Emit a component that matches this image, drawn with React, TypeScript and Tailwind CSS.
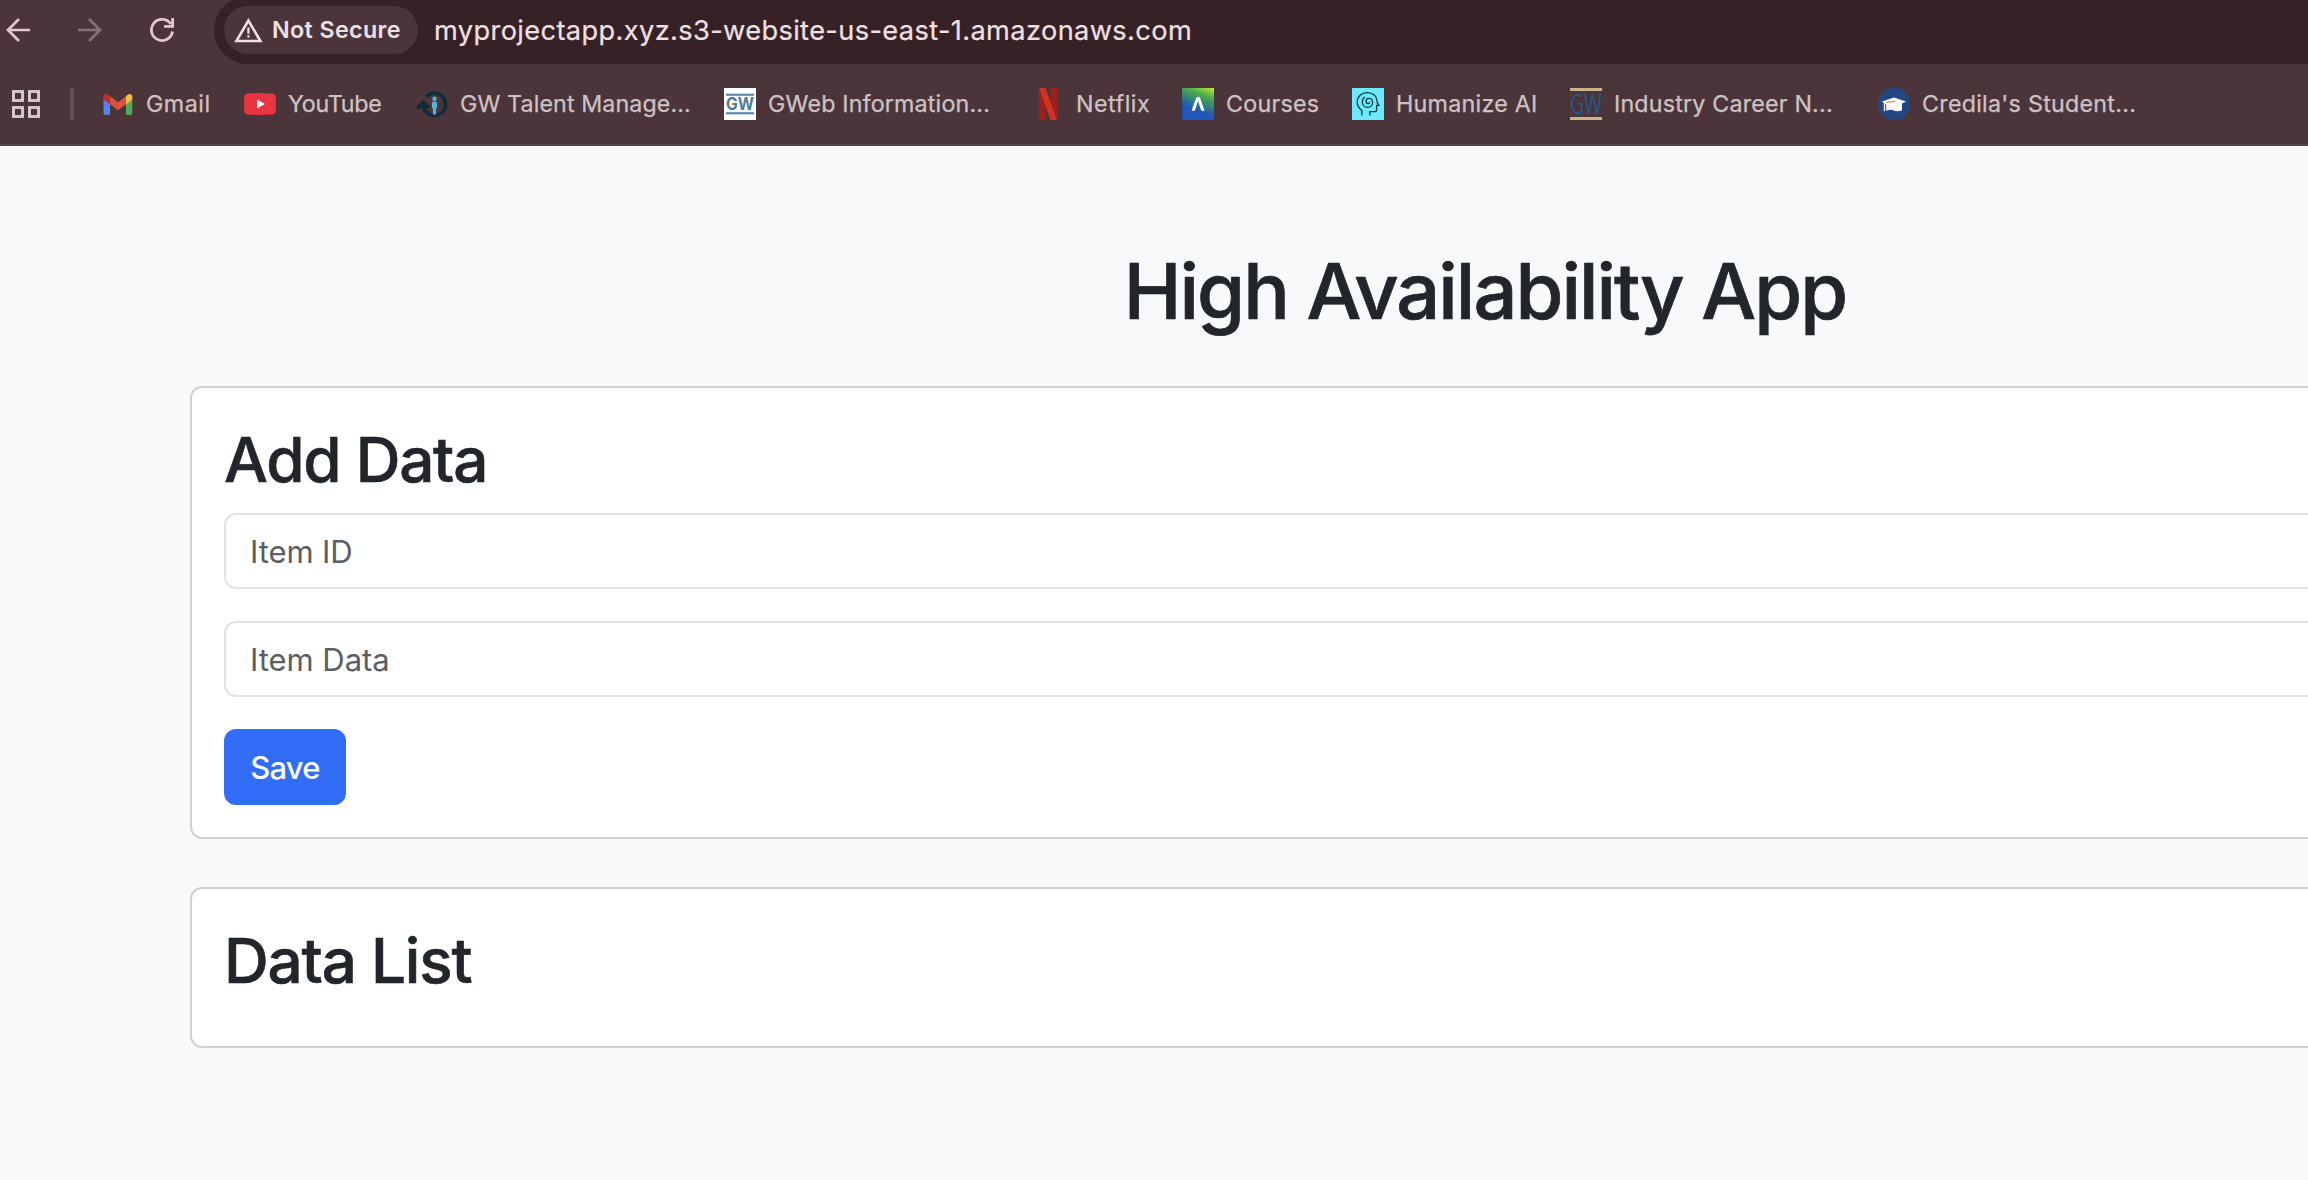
import type { ReactNode } from "react";

const GmailIcon = () => (
  <svg viewBox="0 0 32 32" className="size-8">
    <path d="M1.5 10.5 8 15.2V27H3.4A1.9 1.9 0 0 1 1.5 25.1Z" fill="#4f86ee" />
    <path d="M30.3 10.5 24 15.2V27h4.4a1.9 1.9 0 0 0 1.9-1.9Z" fill="#58a85c" />
    <path d="M24 8.2 26 6.6C27.8 5.2 30.3 6.4 30.3 8.9V11.5L24 16.2Z" fill="#f2c042" />
    <path d="M8 8.2 6 6.6C4.2 5.2 1.5 6.4 1.5 8.9V11.5L8 16.2Z" fill="#b8342b" />
    <path d="M8 8.2 16 14.2 24 8.2V16.2L16 22.2 8 16.2Z" fill="#dc5140" />
  </svg>
);

const YouTubeIcon = () => (
  <svg viewBox="0 0 32 32" className="size-8">
    <path d="M4 5.4Q16 4.6 28 5.4Q31.4 5.7 31.7 9Q32.3 16 31.7 23Q31.4 26.3 28 26.6Q16 27.4 4 26.6Q.6 26.3.3 23Q-.3 16 .3 9Q.6 5.7 4 5.4Z" fill="#ea3340" />
    <path d="M13 11.5 21 16l-8 4.5Z" fill="#fff" />
  </svg>
);

const TalentIcon = () => (
  <svg viewBox="0 0 32 32" className="size-8">
    <path d="M10.3 8.6A11.2 11.2 0 1 1 8 20.5L7.3 15" fill="none" stroke="#122b3b" strokeWidth="3.6" />
    <path d="M1.5 20.5 7.5 14.3 12.8 19.8" fill="none" stroke="#122b3b" strokeWidth="4" />
    <circle cx="18.5" cy="10.8" r="2.2" fill="#4fb4e0" />
    <path d="M15.9 15.2q0-1.6 1.6-1.6h2q1.6 0 1.6 1.6v5h-1v6.4h-3.2v-6.4h-1Z" fill="#4fb4e0" />
  </svg>
);

const GWebIcon = () => (
  <svg viewBox="0 0 32 32" className="size-8 overflow-visible">
    <path fill="#fff" d="M0 0h32v32H0z" />
    <path fill="#4f83a3" d="M2 5.8h28v2H2zM2 24.2h28v2H2z" />
    <text x="16" y="21.8" textAnchor="middle" textLength="28" lengthAdjust="spacingAndGlyphs" fill="#4b7d9c" className="font-['Inter'] text-[17px] font-bold">GW</text>
  </svg>
);

const NetflixIcon = () => (
  <svg viewBox="0 0 32 32" className="size-8">
    <path fill="#9f1f1b" d="M7 0h6.4v32H7zM18.6 0H25v32h-6.4z" />
    <path fill="#d33026" d="M7 0h6.4L25 32h-6.4z" />
  </svg>
);

const CoursesIcon = () => (
  <span className="flex size-8 items-center justify-center bg-[linear-gradient(202deg,#c8ea3e_0%,#4fae4a_24%,#35896c_42%,#2256b8_66%,#2355bd_100%)]">
    <svg viewBox="0 0 32 32" className="size-8">
      <path d="M9.6 22.8 14.4 9.2h3.4l4.8 13.6h-3.3L16 12.8l-3.2 10Z" fill="#fff" />
    </svg>
  </span>
);

const HumanizeIcon = () => (
  <svg viewBox="0 0 32 32" className="size-8" fill="none" stroke="#123a42" strokeWidth="1.3">
    <path fill="#6ceafb" stroke="none" d="M0 0h32v32H0z" />
    <path d="M9.8 27.5V22.5C6.9 20.3 5.2 17.3 5.2 14 5.2 8.5 9.6 4.6 15.5 4.6c5.7 0 9.3 3.6 9.6 8.4l.1 1.5 1.7 2.9h-2.3v4.3q0 2-2 2h-4.8v3.8" />
    <path d="M13 9C11.2 9.9 10.3 11.8 10.3 13.7C10.3 16.9 12.6 19.3 15.6 19.3C18.6 19.3 20.6 17 20.6 14.4C20.6 12 19 10.3 17 10.3C15.2 10.3 14 11.5 14 13.1C14 14.6 15 15.6 16.2 15.6C17.2 15.6 17.8 15 17.8 14.1" />
  </svg>
);

const IndustryIcon = () => (
  <svg viewBox="0 0 32 32" className="size-8 overflow-visible">
    <path fill="#c9b58c" d="M0 0h32v3H0zM0 29h32v3H0z" />
    <text x="16" y="25.6" textAnchor="middle" textLength="32" lengthAdjust="spacingAndGlyphs" fill="#24588a" className="font-['Open_Sans'] text-[27px]">GW</text>
  </svg>
);

const CredilaIcon = () => (
  <svg viewBox="0 0 32 32" className="size-8">
    <circle cx="16" cy="16" r="16" fill="#234685" />
    <path d="M4 13.4 16 9.4 28 13.6 24 15.4V22.2q-4.5 2-8 .3-3.5-1.4-7.8.2V16.2L7.2 15.8V22.7L5.8 23.2V15Z" fill="#fff" />
    <path d="M8 14.3 16.5 13.4V12.6" fill="none" stroke="#e58a92" strokeWidth="1.3" />
  </svg>
);

type Bookmark = { icon: ReactNode; label: string; box: string; text: string };

const bookmarks: Bookmark[] = [
  { icon: <GmailIcon />, label: "Gmail", box: "w-[142px]", text: "tracking-[0.5px]" },
  { icon: <YouTubeIcon />, label: "YouTube", box: "w-[172px]", text: "tracking-[-0.25px]" },
  { icon: <TalentIcon />, label: "GW Talent Manage...", box: "w-[308px]", text: "tracking-[0.1px]" },
  { icon: <GWebIcon />, label: "GWeb Information...", box: "w-[308px]", text: "tracking-[0.17px]" },
  { icon: <NetflixIcon />, label: "Netflix", box: "w-[150px]", text: "tracking-[0.5px]" },
  { icon: <CoursesIcon />, label: "Courses", box: "w-[170px]", text: "tracking-[0.24px]" },
  { icon: <HumanizeIcon />, label: "Humanize AI", box: "w-[218px]", text: "tracking-[0.26px]" },
  { icon: <IndustryIcon />, label: "Industry Career N...", box: "w-[308px]", text: "tracking-[0.19px]" },
  { icon: <CredilaIcon />, label: "Credila's Student...", box: "w-[308px]", text: "tracking-[0.27px]" },
];

function Toolbar() {
  return (
    <div className="flex h-16 items-start pl-1.5">
      <svg viewBox="0 0 24 24" className="mt-[18px] size-6 shrink-0" fill="none" stroke="#e6c4cc" strokeWidth="2.7">
        <path d="M24 12H2.5M13 1 2 12l11 11" />
      </svg>
      <svg viewBox="0 0 24 24" className="mt-[18px] ml-12 size-6 shrink-0" fill="none" stroke="#8a7077" strokeWidth="2.7">
        <path d="M0 12h21.5M11 1l11 11-11 11" />
      </svg>
      <svg viewBox="0 0 24 24" className="mt-[18px] ml-12 size-6 shrink-0" fill="none" stroke="#e6c4cc" strokeWidth="2.8">
        <path d="M22.5 13.5A10.6 10.6 0 1 1 20.8 6M22.6 0V8.4H14" />
      </svg>
      <div className="-mt-1 ml-10 flex h-[68px] flex-1 items-center rounded-l-full bg-[#362126] pl-2.5">
        <div className="flex h-12 w-[194px] shrink-0 items-center rounded-full bg-[#4b353a] pl-2.5">
          <svg viewBox="0 0 29 25" className="h-[25px] w-[29px] shrink-0" fill="none" stroke="#f0e0e3" strokeWidth="2.6">
            <path d="M14.4 2.6 26.4 23H2.4Z" />
            <path d="M14.4 9.5v6.2M14.4 17.2v2.2" strokeWidth="2.2" />
          </svg>
          <span className="ml-[9px] whitespace-nowrap text-[23.25px] font-semibold tracking-[0.38px] text-[#efe0e3]">Not Secure</span>
        </div>
        <span className="ml-4 whitespace-nowrap pt-0.5 text-[27.2px] tracking-[0.38px] text-[#efe0e3] [-webkit-text-stroke:0.2px]">
          myprojectapp.xyz.s3-website-us-east-1.amazonaws.com
        </span>
      </div>
    </div>
  );
}

function BookmarksBar() {
  return (
    <div className="flex h-20 items-center pl-3">
      <div className="grid shrink-0 grid-cols-2 gap-1">
        <i className="size-3 border-3 border-[#d3c5c8]" />
        <i className="size-3 border-3 border-[#d3c5c8]" />
        <i className="size-3 border-3 border-[#d3c5c8]" />
        <i className="size-3 border-3 border-[#d3c5c8]" />
      </div>
      <div className="mr-7 ml-[30px] h-8 w-1 shrink-0 rounded-full bg-[#664f54]" />
      {bookmarks.map((b) => (
        <div key={b.label} className={`flex shrink-0 items-center gap-3 ${b.box}`}>
          <span className="shrink-0">{b.icon}</span>
          <span className={`whitespace-nowrap text-[23.25px] text-[#cfc2c4] [-webkit-text-stroke:0.25px] ${b.text}`}>{b.label}</span>
        </div>
      ))}
    </div>
  );
}

function Card({ title, tracking, children }: { title: string; tracking: string; children?: ReactNode }) {
  return (
    <section className="rounded-xl border-2 border-[#d0d0d1] bg-white p-8">
      <h2 className={`mb-4 h-[77px] pt-px text-[62px] leading-[77px] font-medium [-webkit-text-stroke:0.6px] ${tracking}`}>{title}</h2>
      {children}
    </section>
  );
}

const field =
  "mb-8 block h-[76px] w-full rounded-xl border-2 border-[#dfe2e6] bg-white px-6 text-[31px] text-[#22252a] outline-none placeholder:text-[#5a5d61] placeholder:opacity-100";

export default function App() {
  return (
    <div className="flex h-[1180px] w-[2308px] flex-col overflow-hidden bg-[#f8f9fb] font-['Inter',sans-serif] text-[#22252a]">
      <header className="h-[146px] shrink-0 overflow-hidden border-b-2 border-[#504648] bg-[#4b353a]">
        <Toolbar />
        <BookmarksBar />
      </header>
      <main className="ml-[190px] flex w-[2592px] flex-col gap-12 pt-24">
        <h1 className="h-24 pt-px pr-0.5 text-center text-[77.5px] leading-[96px] font-medium tracking-[-1.97px] [-webkit-text-stroke:0.7px]">
          High Availability App
        </h1>
        <Card title="Add Data" tracking="tracking-[-1.25px]">
          <input className={`${field} tracking-[-0.1px]`} placeholder="Item ID" />
          <input className={`${field} tracking-[-0.04px]`} placeholder="Item Data" />
          <button className="block h-[76px] w-[122px] rounded-xl bg-[#316df6] pt-0.5 text-[31px] font-medium tracking-[-0.8px] text-white">Save</button>
        </Card>
        <Card title="Data List" tracking="tracking-[-1.22px]" />
      </main>
    </div>
  );
}
